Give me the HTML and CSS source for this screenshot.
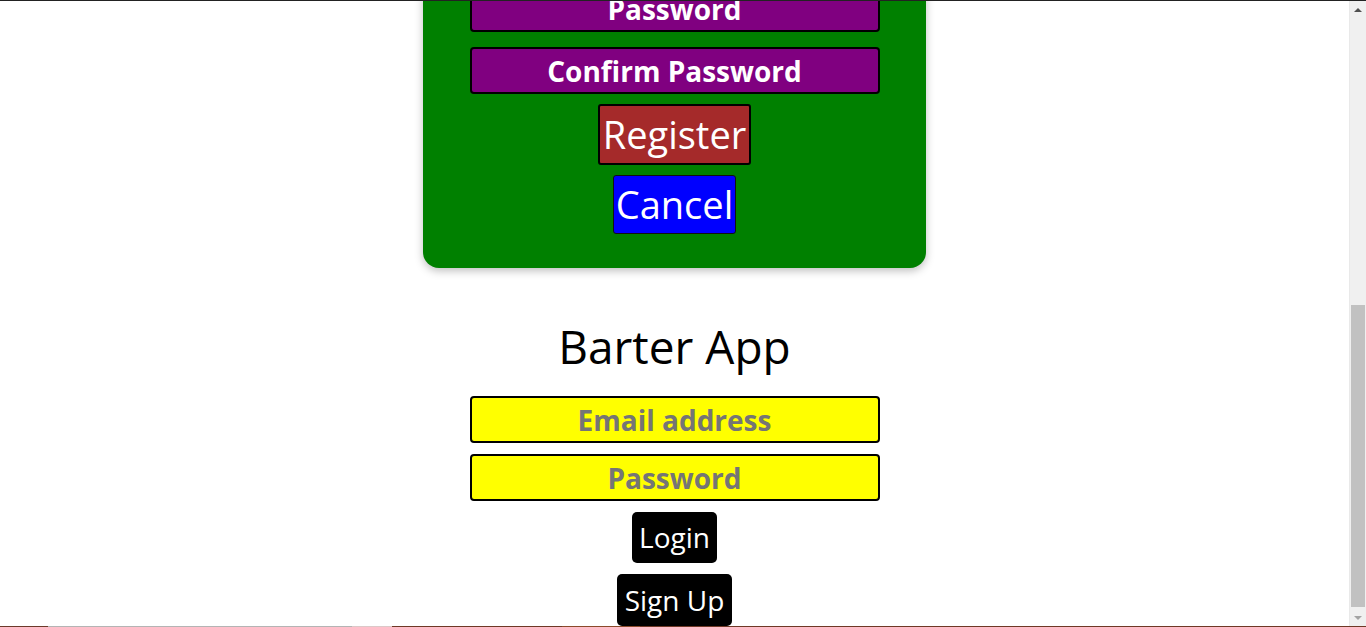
FILE: index.html
```html
<!DOCTYPE html>
<html>
<head>
  <title>Barter App</title>
  <meta charset="utf-8" />
  <link rel="stylesheet" href="styles.css">
</head>
<body>
  <div class="screen">
    <div class="viewport">
      <main class="page">
        <form class="register-card" autocomplete="off" onsubmit="return false;">
          <input class="field" type="text" placeholder="First Name" />
          <input class="field" type="text" placeholder="Last Name" />
          <input class="field" type="text" placeholder="Contact" />
          <input class="field" type="text" placeholder="Address" />
          <input class="field" type="email" placeholder="Email" />
          <input class="field" type="password" placeholder="Password" />
          <input class="field" type="password" placeholder="Confirm Password" />
          <button class="btn-register" type="submit">Register</button>
          <button class="btn-cancel" type="button">Cancel</button>
        </form>

        <h1 class="title">Barter App</h1>

        <div class="login-box">
          <input class="login-input" type="email" placeholder="Email address" />
          <input class="login-input" type="password" placeholder="Password" />
          <button class="btn-dark" type="button">Login</button>
          <button class="btn-dark" type="button">Sign Up</button>
        </div>
      </main>

      <div class="scrollbar">
        <div class="arrow arrow-up"></div>
        <div class="track">
          <div class="thumb"></div>
        </div>
        <div class="arrow arrow-down"></div>
      </div>
    </div>
    <div class="taskline"></div>
  </div>
</body>
</html>
```

FILE: styles.css
```css
html, body {
  margin: 0;
  height: 100%;
  overflow: hidden;
}
body {
  font-family: "Open Sans", "Noto Sans", sans-serif;
  background: #fff;
}
.screen {
  height: 627px;
  display: flex;
  flex-direction: column;
  border-top: 1px solid #222;
  box-sizing: border-box;
}
.viewport {
  flex: 1;
  display: flex;
  min-height: 0;
}
.page {
  flex: 1;
  display: flex;
  flex-direction: column;
  align-items: center;
  justify-content: flex-end;
  overflow: hidden;
}

/* register card */
.register-card {
  flex-shrink: 0;
  width: 503px;
  box-sizing: border-box;
  padding: 30px 46px 34px;
  display: flex;
  flex-direction: column;
  align-items: center;
  gap: 10px;
  background: #008000;
  border-radius: 16px;
  box-shadow: 0 3px 8px rgba(0, 0, 0, 0.25);
}
.field {
  width: 410px;
  height: 47px;
  box-sizing: border-box;
  border: 2px solid #000;
  border-radius: 4px;
  background: #800080;
  color: #fff;
  font-family: inherit;
  font-size: 28px;
  font-weight: 700;
  text-align: center;
  outline: none;
}
.field + .field {
  margin-top: 5px;
}
.field::placeholder {
  color: #fff;
  opacity: 1;
}
.btn-register,
.btn-cancel {
  font-family: inherit;
  font-size: 38px;
  color: #fff;
  line-height: 57px;
  cursor: pointer;
}
.btn-register {
  padding: 0 3px;
  background: #a52a2a;
  border: 2px solid #000;
  border-radius: 3px;
}
.btn-cancel {
  padding: 0 2px;
  background: #0000ff;
  border: 1px solid #111;
  border-radius: 3px;
}

/* login */
.title {
  margin: 52px 0 24px;
  font-size: 46px;
  font-weight: 400;
  line-height: 52px;
  color: #000;
}
.login-box {
  display: flex;
  flex-direction: column;
  align-items: center;
  gap: 11px;
}
.login-input {
  width: 410px;
  height: 47px;
  box-sizing: border-box;
  border: 2px solid #000;
  border-radius: 4px;
  background: #ffff00;
  font-family: inherit;
  font-size: 28px;
  font-weight: 700;
  text-align: center;
  outline: none;
}
.login-input::placeholder {
  color: #757575;
  opacity: 1;
}
.btn-dark {
  padding: 0 7px;
  border: 0;
  border-radius: 5px;
  background: #000;
  color: #fff;
  font-family: inherit;
  font-size: 28px;
  line-height: 51px;
  cursor: pointer;
}
.btn-dark:last-child {
  padding: 0 8px;
  line-height: 52px;
}

/* fake scrollbar */
.scrollbar {
  width: 17px;
  display: flex;
  flex-direction: column;
  background: #f0f0f0;
  border-left: 1px solid #e9e9e9;
  box-sizing: border-box;
}
.arrow {
  height: 17px;
  display: flex;
  align-items: center;
  justify-content: center;
}
.arrow-up::before,
.arrow-down::before {
  content: "";
  border-left: 4px solid transparent;
  border-right: 4px solid transparent;
}
.arrow-up::before {
  border-bottom: 4px solid #505050;
}
.arrow-down::before {
  border-top: 4px solid #a3a3a3;
}
.track {
  flex: 1;
  display: flex;
  flex-direction: column;
  justify-content: flex-end;
  padding: 0 1px 2px 1px;
}
.thumb {
  height: 302px;
  background: #c1c1c1;
}

.taskline {
  height: 1px;
  background: linear-gradient(to right,
    #6b3a2a 0 48px,
    #b4b4b4 48px 352px,
    #dcc8c8 352px 392px,
    #6e3826 392px 562px,
    #8a4a2a 562px 640px,
    #6e3826 640px 100%);
}
```
